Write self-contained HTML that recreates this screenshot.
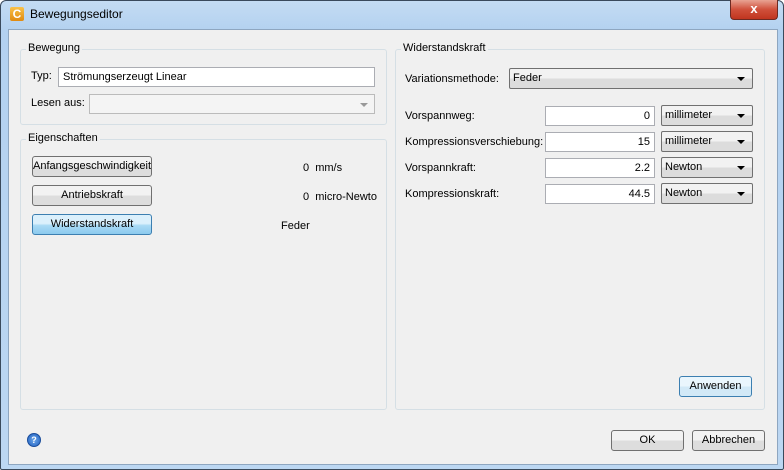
<html><head><style>
body{margin:0;width:784px;height:470px;overflow:hidden;font-family:"Liberation Sans",sans-serif;font-size:11px;color:#000;}
.win{position:absolute;left:0;top:0;width:782px;height:468px;border:1px solid #3a4a5c;border-radius:6px 6px 2px 2px;background:linear-gradient(#c4dcf3,#b3d1f0 30px,#bcd7f2);}
.client{position:absolute;left:7px;top:28px;width:768px;height:434px;background:#f0f0f0;border:1px solid #8ea6c0;}
.a{position:absolute;}
.grp{position:absolute;border:1px solid #d5dfe5;border-radius:3px;}
.lg{position:absolute;top:-8px;left:5px;background:#f0f0f0;padding:0 2px;}
.in{position:absolute;background:#fff;border:1px solid #abadb3;height:20px;box-sizing:border-box;line-height:19px;padding:0 4px;}
.cb{position:absolute;border:1px solid #707070;border-radius:2px;height:21px;box-sizing:border-box;background:linear-gradient(#f2f2f2 50%,#dcdcdc 50%);line-height:18px;padding:0 3px;}
.cb:after{content:"";position:absolute;right:7px;top:8px;border-left:4px solid transparent;border-right:4px solid transparent;border-top:4px solid #000;}
.btn{position:absolute;border:1px solid #707070;border-radius:3px;height:21px;box-sizing:border-box;background:linear-gradient(#f2f2f2 50%,#dddddd 50%);text-align:center;line-height:19px;}
</style></head><body>
<div class="win">
<div class="a" style="left:9px;top:6px;width:14px;height:14px;background:linear-gradient(#f8c24a,#e08a10);border-radius:2px;color:#fff;font-weight:bold;font-size:12px;line-height:14px;text-align:center">C</div>
<div class="a" style="left:29px;top:6px;font-size:12px">Bewegungseditor</div>
<div class="a" style="left:729px;top:-1px;width:46px;height:19px;border:1px solid #6d2a22;border-top:none;border-radius:0 0 4px 4px;background:linear-gradient(#e8a393,#d0503b 50%,#c0351f);color:#fff;font-weight:bold;text-align:center;line-height:18px;font-size:13px">x</div>
<div class="client">
<div class="grp" style="left:11px;top:19px;width:365px;height:74px"><div class="lg">Bewegung</div></div>
<div class="a" style="left:22px;top:40px">Typ:</div>
<div class="in" style="left:49px;top:37px;width:317px">Strömungserzeugt Linear</div>
<div class="a" style="left:22px;top:67px">Lesen aus:</div>
<div class="in" style="left:80px;top:64px;width:286px;border-color:#bbb;background:#f4f4f4"><span style="position:absolute;right:6px;top:8px;border-left:4px solid transparent;border-right:4px solid transparent;border-top:4px solid #999"></span></div>
<div class="grp" style="left:11px;top:109px;width:365px;height:269px"><div class="lg">Eigenschaften</div></div>
<div class="btn" style="left:23px;top:126px;width:120px">Anfangsgeschwindigkeit</div>
<div class="a" style="left:294px;top:132px">0&nbsp; mm/s</div>
<div class="btn" style="left:23px;top:155px;width:120px">Antriebskraft</div>
<div class="a" style="left:294px;top:161px">0&nbsp; micro-Newto</div>
<div class="btn" style="left:23px;top:184px;width:120px;border-color:#3c7fb1;background:linear-gradient(#dbf0fc 45%,#a9daf5 55%,#8ccaee)">Widerstandskraft</div>
<div class="a" style="left:272px;top:190px">Feder</div>
<div class="grp" style="left:386px;top:19px;width:368px;height:359px"><div class="lg">Widerstandskraft</div></div>
<div class="a" style="left:396px;top:43px">Variationsmethode:</div>
<div class="cb" style="left:500px;top:38px;width:244px">Feder</div>
<div class="a" style="left:396px;top:80px">Vorspannweg:</div>
<div class="in" style="left:536px;top:76px;width:110px;text-align:right">0</div>
<div class="cb" style="left:652px;top:75px;width:92px">millimeter</div>
<div class="a" style="left:396px;top:106px">Kompressionsverschiebung:</div>
<div class="in" style="left:536px;top:102px;width:110px;text-align:right">15</div>
<div class="cb" style="left:652px;top:101px;width:92px">millimeter</div>
<div class="a" style="left:396px;top:132px">Vorspannkraft:</div>
<div class="in" style="left:536px;top:128px;width:110px;text-align:right">2.2</div>
<div class="cb" style="left:652px;top:127px;width:92px">Newton</div>
<div class="a" style="left:396px;top:158px">Kompressionskraft:</div>
<div class="in" style="left:536px;top:154px;width:110px;text-align:right">44.5</div>
<div class="cb" style="left:652px;top:153px;width:92px">Newton</div>
<div class="btn" style="left:670px;top:346px;width:73px;border-color:#3c7fb1;background:linear-gradient(#eaf6fd 50%,#d2e9f7 50%)">Anwenden</div>
<div class="a" style="left:18px;top:403px;width:12px;height:12px;border-radius:50%;background:radial-gradient(#6fa8ea,#1d5fc0);border:1px solid #1a4c9a;color:#fff;font-size:9px;font-weight:bold;text-align:center;line-height:12px">?</div>
<div class="btn" style="left:602px;top:400px;width:73px">OK</div>
<div class="btn" style="left:683px;top:400px;width:73px">Abbrechen</div>
</div>
</div>
</body></html>
